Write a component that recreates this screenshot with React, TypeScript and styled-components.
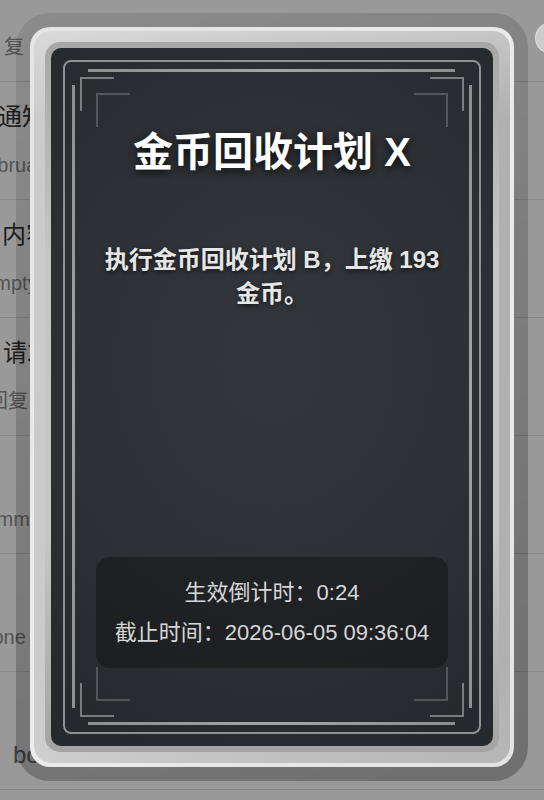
import styled, { createGlobalStyle } from 'styled-components';
import { X } from 'lucide-react';

const GlobalStyle = createGlobalStyle`
  html, body {
    margin: 0;
    padding: 0;
  }
  body {
    background: #ffffff;
    font-family: "Liberation Sans", "Noto Sans CJK SC", sans-serif;
    overflow: hidden;
  }
`;

const Page = styled.div`
  width: 544px;
  height: 800px;
  overflow: hidden;
  background: #ffffff;
`;

const FeedList = styled.ul`
  list-style: none;
  margin: -36px 0 0 0;
  padding: 0;
`;

const FeedRow = styled.li`
  height: 118px;
  box-sizing: border-box;
  border-bottom: 1px solid #e2e2e2;
  padding-top: 19px;
  display: flex;
  flex-direction: column;
  gap: 18px;
  white-space: nowrap;
`;

const FeedTitle = styled.div<{ $x: number }>`
  height: 32px;
  line-height: 32px;
  font-size: 24px;
  color: #333333;
  margin-left: ${(p) => p.$x}px;
`;

const FeedSub = styled.div<{ $x: number; $strong?: boolean }>`
  line-height: 28px;
  font-size: ${(p) => (p.$strong ? 24 : 20)}px;
  color: ${(p) => (p.$strong ? '#6a6a6a' : '#8c8c8c')};
  margin-left: ${(p) => p.$x}px;
`;

const Overlay = styled.div`
  position: fixed;
  inset: 0;
  background: rgba(0, 0, 0, 0.4);
  display: flex;
  align-items: center;
  justify-content: center;
`;

const Shade = styled.div`
  position: relative;
  margin-bottom: 6px;
  padding: 14px;
  border-radius: 34px;
  background: linear-gradient(155deg, rgba(0, 0, 0, 0.09), rgba(0, 0, 0, 0.28));
`;

const CloseButton = styled.button`
  position: absolute;
  top: 9px;
  right: -39px;
  width: 32px;
  height: 32px;
  border-radius: 50%;
  border: 1px solid rgba(255, 255, 255, 0.35);
  background: rgba(255, 255, 255, 0.5);
  color: #555;
  display: flex;
  align-items: center;
  justify-content: center;
  padding: 0;
`;

const Card = styled.div`
  width: 484px;
  height: 740px;
  box-sizing: border-box;
  padding: 4px;
  border-radius: 20px;
  background: linear-gradient(135deg, #e4e4e4, #ececec 60%, #e2e2e2);
`;

const Band = styled.div`
  height: 100%;
  box-sizing: border-box;
  padding: 11px;
  border-radius: 17px;
  background:
    linear-gradient(180deg, rgba(255, 255, 255, 0.28), rgba(255, 255, 255, 0) 12%, rgba(255, 255, 255, 0) 85%, rgba(255, 255, 255, 0.08)),
    linear-gradient(90deg, #cbcbcb, #bcbcbc 50%, #b0b0b0);
`;

const Ring = styled.div`
  height: 100%;
  box-sizing: border-box;
  padding: 6px;
  border-radius: 15px;
  background: linear-gradient(180deg, #a7a7a7, #c6c6c6 30%, #c6c6c6 70%, #a3a3a3);
`;

const Panel = styled.div`
  position: relative;
  height: 100%;
  box-sizing: border-box;
  border-radius: 10px;
  overflow: hidden;
  padding: 80px 45px 78px;
  display: flex;
  flex-direction: column;
  align-items: stretch;
  background: radial-gradient(ellipse 80% 60% at 50% 45%, #33363b 0%, #2d3035 60%, #26292d 100%);
`;

const FrameLine = styled.div`
  position: absolute;
  inset: 12px;
  border: 2px solid #8f9194;
  border-radius: 8px;
  pointer-events: none;
`;

const Bar = styled.div<{ $side: 'top' | 'bottom' | 'left' | 'right' }>`
  position: absolute;
  pointer-events: none;
  ${(p) =>
    p.$side === 'top' || p.$side === 'bottom'
      ? `left: 37px; right: 38px; height: 3px; ${p.$side}: 21px;
         background: linear-gradient(90deg, #8e8f91, #a3a4a6 50%, #8e8f91);`
      : `top: 37px; bottom: 38px; width: 3px; ${p.$side}: 21px;
         background: linear-gradient(180deg, #8e8f91, #a3a4a6 50%, #8e8f91);`}
`;

const Bracket = styled.div<{ $corner: 'tl' | 'tr' | 'bl' | 'br'; $inset: number; $tone: string }>`
  position: absolute;
  width: 32px;
  height: 32px;
  pointer-events: none;
  ${(p) => (p.$corner[0] === 't' ? 'top' : 'bottom')}: ${(p) => p.$inset}px;
  ${(p) => (p.$corner[1] === 'l' ? 'left' : 'right')}: ${(p) => p.$inset}px;
  border-${(p) => (p.$corner[0] === 't' ? 'top' : 'bottom')}: 2px solid ${(p) => p.$tone};
  border-${(p) => (p.$corner[1] === 'l' ? 'left' : 'right')}: 2px solid ${(p) => p.$tone};
`;

const Title = styled.h1`
  position: relative;
  margin: 0;
  text-align: center;
  font-size: 40px;
  line-height: 48px;
  font-weight: 700;
  color: #ffffff;
  text-shadow: 0 3px 8px rgba(0, 0, 0, 0.75);
`;

const Message = styled.p`
  position: relative;
  margin: 67px 0 0;
  text-align: center;
  font-size: 24px;
  line-height: 34px;
  font-weight: 700;
  color: #e6e6e6;
  text-shadow: 0 2px 5px rgba(0, 0, 0, 0.6);
`;

const InfoBox = styled.div`
  position: relative;
  margin-top: auto;
  padding: 18px 12px;
  border-radius: 14px;
  background: rgba(0, 0, 0, 0.3);
  display: flex;
  flex-direction: column;
  gap: 5px;
`;

const InfoLine = styled.div`
  text-align: center;
  font-size: 22px;
  line-height: 35px;
  color: #d6d6d6;
  white-space: nowrap;
`;

const feed = [
  { title: '', sub: '复', titleX: 0, subX: 4 },
  { title: '通知中心', sub: 'February', titleX: -2, subX: -26 },
  { title: '内容', sub: 'Empty', titleX: 2, subX: -19 },
  { title: '请求', sub: '回复', titleX: 3, subX: -12 },
  { title: '', sub: 'Comment', titleX: 0, subX: -29 },
  { title: '', sub: 'None', titleX: 0, subX: -22 },
  { title: '', sub: 'bot', titleX: 0, subX: 13, strong: true },
];

const corners = ['tl', 'tr', 'bl', 'br'] as const;

export default function App() {
  return (
    <>
      <GlobalStyle />
      <Page>
        <FeedList>
          {feed.map((row, i) => (
            <FeedRow key={i}>
              <FeedTitle $x={row.titleX}>{row.title}</FeedTitle>
              <FeedSub $x={row.subX} $strong={row.strong}>
                {row.sub}
              </FeedSub>
            </FeedRow>
          ))}
        </FeedList>
      </Page>
      <Overlay>
        <Shade>
          <CloseButton aria-label="关闭">
            <X size={14} />
          </CloseButton>
          <Card>
            <Band>
              <Ring>
                <Panel>
                  <FrameLine />
                  <Bar $side="top" />
                  <Bar $side="bottom" />
                  <Bar $side="left" />
                  <Bar $side="right" />
                  {corners.map((c) => (
                    <Bracket key={`o-${c}`} $corner={c} $inset={29} $tone="rgba(255,255,255,0.38)" />
                  ))}
                  {corners.map((c) => (
                    <Bracket key={`i-${c}`} $corner={c} $inset={45} $tone="rgba(255,255,255,0.2)" />
                  ))}
                  <Title>金币回收计划 X</Title>
                  <Message>执行金币回收计划 B，上缴 193 金币。</Message>
                  <InfoBox>
                    <InfoLine>生效倒计时：0:24</InfoLine>
                    <InfoLine>截止时间：2026-06-05 09:36:04</InfoLine>
                  </InfoBox>
                </Panel>
              </Ring>
            </Band>
          </Card>
        </Shade>
      </Overlay>
    </>
  );
}
